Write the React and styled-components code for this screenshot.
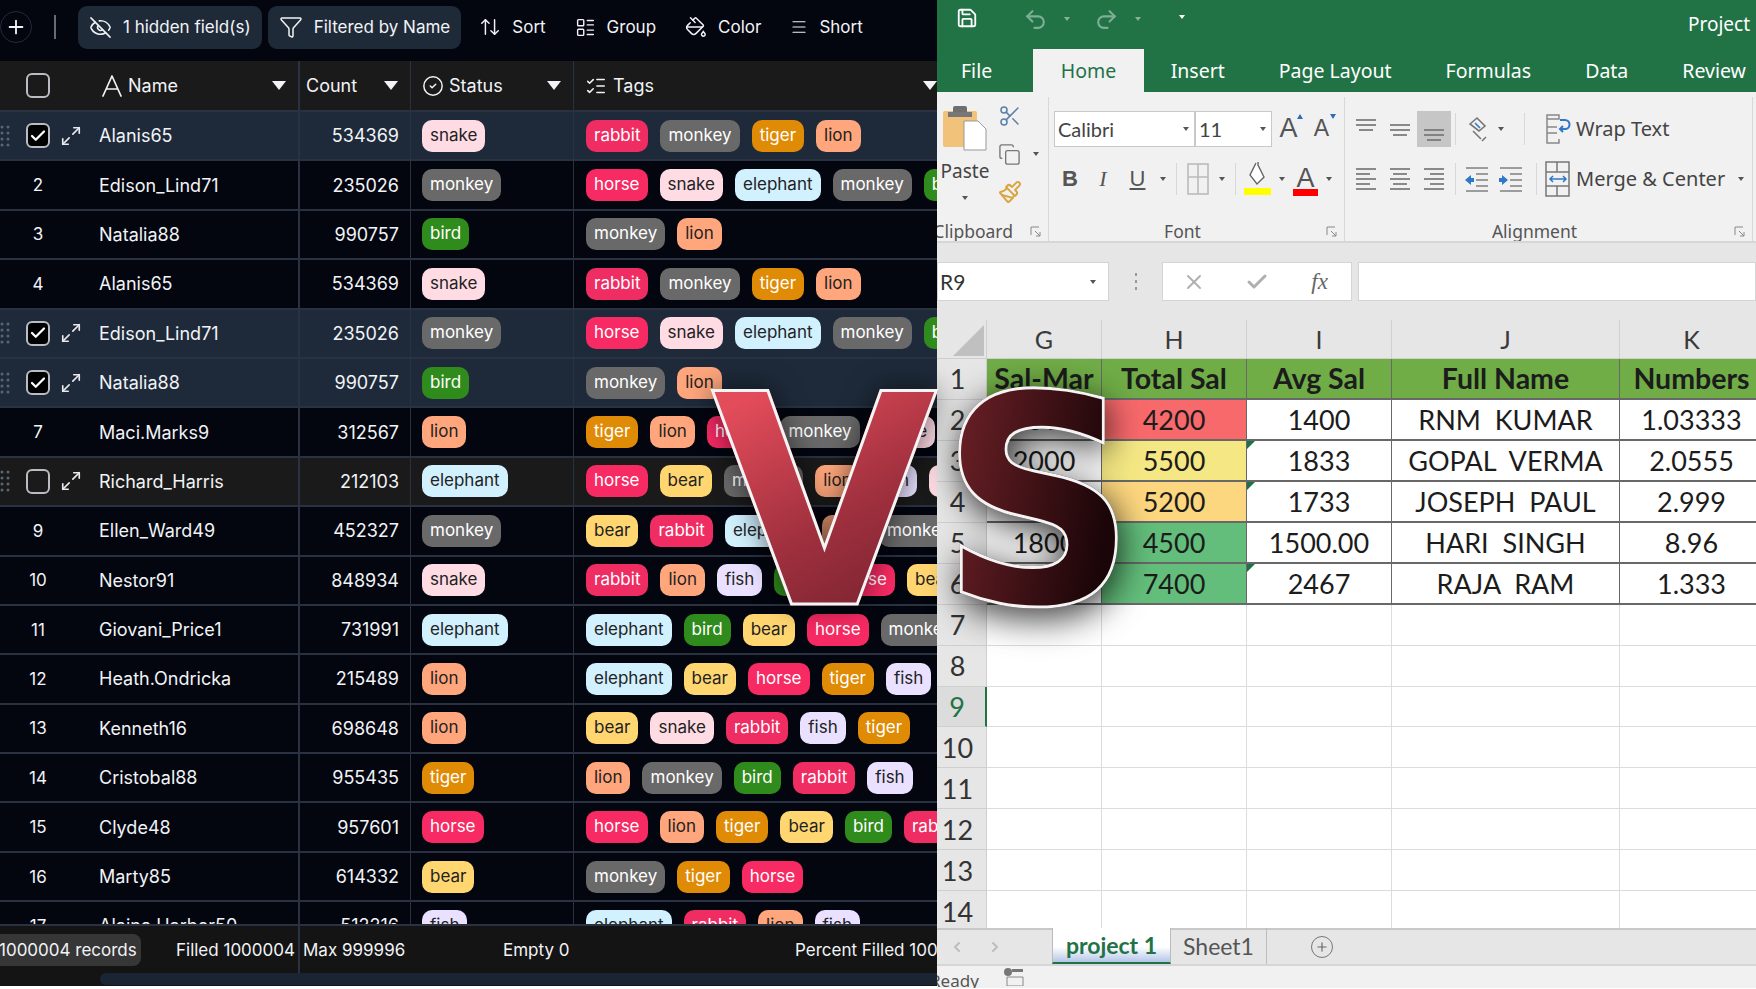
import React from 'react';
import styled, { createGlobalStyle } from 'styled-components';
import {
  Plus, EyeOff, Funnel, ArrowUpDown, LayoutList, PaintBucket, Menu, CircleCheck, ListChecks,
  Maximize2, Check, Save, Undo2, Redo2, Scissors, Copy, Paintbrush, X, ChevronLeft, ChevronRight,
} from 'lucide-react';

const GlobalStyle = createGlobalStyle`
  html, body { margin: 0; padding: 0; background: #fff; }
  body { font-family: Inter, "Liberation Sans", sans-serif; }
`;

const Page = styled.div`
  position: relative;
  display: flex;
  width: 1756px;
  height: 988px;
  overflow: hidden;
  background: #fff;
`;

/* ---------- dark table ---------- */

const Board = styled.div`
  width: 937px;
  flex: none;
  height: 986px;
  display: flex;
  flex-direction: column;
  background: #03050f;
  color: #f1f3f6;
  overflow: hidden;
  font-size: 18px;
`;

const Toolbar = styled.div`
  height: 61px;
  flex: none;
  display: flex;
  align-items: center;
  padding-bottom: 7px;
  box-sizing: border-box;
`;

const RoundBtn = styled.div`
  width: 32px;
  height: 32px;
  flex: none;
  border: 1px solid #252a38;
  border-radius: 50%;
  display: flex;
  align-items: center;
  justify-content: center;
  box-sizing: border-box;
`;

const ToolDivider = styled.div`
  width: 2px;
  height: 24px;
  background: #666b74;
  margin: 0 22px 0 22px;
`;

const Chip = styled.div`
  height: 43px;
  display: flex;
  align-items: center;
  gap: 11px;
  padding: 0 11px;
  margin-right: 6px;
  background: #1f2a38;
  border-radius: 9px;
  font-size: 17px;
  box-sizing: border-box;
`;

const ToolBtn = styled.div`
  display: flex;
  align-items: center;
  gap: 11px;
  margin-left: ${p => p.$ml}px;
  font-size: 17px;
`;

const Grid = styled.div`
  display: grid;
  grid-template-columns: 88px 212px 111px 163px 1fr;
  height: ${p => p.$h}px;
  flex: none;
  box-sizing: border-box;
  background: ${p => p.$bg};
  border-top: ${p => p.$flat ? 'none' : '2px solid #2a3140'};
`;

const Cell = styled.div`
  display: flex;
  align-items: center;
  min-width: 0;
  overflow: hidden;
  white-space: nowrap;
  border-right: ${p => p.$thick ? 2 : p.$open ? 0 : 1}px solid #2a3140;
  box-sizing: border-box;
  padding: ${p => p.$pad || '0'};
  justify-content: ${p => p.$justify || 'flex-start'};
`;

const Marker = styled(Cell)`
  position: relative;
  border-right: none;
  justify-content: flex-start;
  padding-left: 26px;
`;

const RowNum = styled.span`
  width: 32px;
  margin-left: -4px;
  text-align: center;
  font-size: 17px;
`;

const NameIcon = styled.span`
  display: flex;
  margin-right: ${p => p.$mr ?? 6}px;
`;

const HeadText = styled.span`
  flex: 1;
  font-size: 18px;
`;

const Caret = styled.span`
  width: 0;
  height: 0;
  border-left: 7px solid transparent;
  border-right: 7px solid transparent;
  border-top: 9px solid #f1f3f6;
`;

const CheckBox = styled.span`
  width: 24px;
  height: 25px;
  flex: none;
  box-sizing: border-box;
  border: 2px solid #b9bcc2;
  border-radius: 6px;
  display: flex;
  align-items: center;
  justify-content: center;
  background: ${p => p.$on ? '#000' : 'transparent'};
`;

const Grip = styled.svg`
  position: absolute;
  left: 0;
  top: 50%;
  margin-top: -11px;
`;

const Expand = styled.span`
  display: flex;
  margin-left: 10px;
`;

const Tag = styled.span`
  flex: none;
  height: 32px;
  padding: 0 8px;
  line-height: 31px;
  border-radius: 10px;
  font-size: 17px;
  box-sizing: border-box;
  color: ${p => p.$fg};
  background: ${p => p.$bg};
`;

const Tags = styled(Cell)`
  gap: 12px;
  padding-left: 12px;
  border-right: none;
`;

const Footer = styled.div`
  flex: none;
  height: 49px;
  background: #141414;
  border-top: 2px solid #2a3140;
  box-sizing: border-box;
  display: grid;
  grid-template-columns: 300px 1fr;
  font-size: 17px;
  white-space: nowrap;
  overflow: hidden;
`;

const FootLeft = styled.div`
  display: flex;
  align-items: center;
  border-right: 2px solid #2a3140;
  justify-content: space-between;
  padding-right: 3px;
`;

const Records = styled.span`
  height: 32px;
  line-height: 32px;
  margin-left: -3px;
  padding: 0 4px 0 2px;
  background: #363636;
  border-radius: 0 8px 8px 0;
`;

const FootRight = styled.div`
  display: grid;
  grid-template-columns: 200px 292px 1fr;
  align-items: center;
  padding-left: 3px;
`;

const ScrollArea = styled.div`
  flex: none;
  height: 13px;
  background: #141414;
  padding-left: 100px;
`;

const ScrollThumb = styled.div`
  height: 12px;
  background: #1a2433;
  border-radius: 6px 0 0 6px;
`;

const Rows = styled.div`
  flex: 1;
  min-height: 0;
  overflow: hidden;
`;

const TAGS = {
  rabbit: ['#ef2d63', '#fff'],
  horse: ['#f72a63', '#fff'],
  monkey: ['#696969', '#fff'],
  tiger: ['#e08b05', '#fff'],
  lion: ['#ffa67c', '#222'],
  snake: ['#ffdbe4', '#222'],
  elephant: ['#d1f1ff', '#222'],
  bird: ['#2f8b1c', '#fff'],
  bear: ['#ffd670', '#222'],
  fish: ['#e9e1ff', '#222'],
};

const ROWS = [
  ['1', 'Alanis65', '534369', 'snake', 'rabbit monkey tiger lion', 'on'],
  ['2', 'Edison_Lind71', '235026', 'monkey', 'horse snake elephant monkey bird'],
  ['3', 'Natalia88', '990757', 'bird', 'monkey lion'],
  ['4', 'Alanis65', '534369', 'snake', 'rabbit monkey tiger lion'],
  ['5', 'Edison_Lind71', '235026', 'monkey', 'horse snake elephant monkey bird', 'on'],
  ['6', 'Natalia88', '990757', 'bird', 'monkey lion', 'on'],
  ['7', 'Maci.Marks9', '312567', 'lion', 'tiger lion horse monkey snake'],
  ['8', 'Richard_Harris', '212103', 'elephant', 'horse bear monkey lion fish snake', 'off'],
  ['9', 'Ellen_Ward49', '452327', 'monkey', 'bear rabbit elephant lion monkey'],
  ['10', 'Nestor91', '848934', 'snake', 'rabbit lion fish bird horse bear'],
  ['11', 'Giovani_Price1', '731991', 'elephant', 'elephant bird bear horse monkey'],
  ['12', 'Heath.Ondricka', '215489', 'lion', 'elephant bear horse tiger fish'],
  ['13', 'Kenneth16', '698648', 'lion', 'bear snake rabbit fish tiger'],
  ['14', 'Cristobal88', '955435', 'tiger', 'lion monkey bird rabbit fish'],
  ['15', 'Clyde48', '957601', 'horse', 'horse lion tiger bear bird rabbit'],
  ['16', 'Marty85', '614332', 'bear', 'monkey tiger horse'],
  ['17', 'Alaina.Harber50', '512216', 'fish', 'elephant rabbit lion fish'],
];

const TagPill = ({ name }) => <Tag $bg={TAGS[name][0]} $fg={TAGS[name][1]}>{name}</Tag>;

const GripDots = () => (
  <Grip width="10" height="22" viewBox="0 0 10 22" fill="#5b6472">
    {[2, 8, 14, 20].map(y => [2, 8].map(x => <circle key={`${x}-${y}`} cx={x} cy={y} r="1.5" />))}
  </Grip>
);

const rowBg = state => (state === 'on' ? '#1e2a3a' : state === 'off' ? '#1a1a1a' : '#03050f');

const TableRow = ({ row }) => {
  const [num, name, count, status, tags, state] = row;
  return (
    <Grid $h={49.4} $bg={rowBg(state)}>
      <Marker>
        {state ? (
          <>
            <GripDots />
            <CheckBox $on={state === 'on'}>{state === 'on' && <Check size={18} strokeWidth={3} color="#fff" />}</CheckBox>
            <Expand><Maximize2 size={22} strokeWidth={1.8} color="#e8eaee" /></Expand>
          </>
        ) : <RowNum>{num}</RowNum>}
      </Marker>
      <Cell $thick $pad="0 0 0 11px">{name}</Cell>
      <Cell $pad="0 11px 0 0" $justify="flex-end">{count}</Cell>
      <Cell $pad="0 0 0 11px"><TagPill name={status} /></Cell>
      <Tags>{tags.split(' ').map((t, i) => <TagPill key={i} name={t} />)}</Tags>
    </Grid>
  );
};

const Table = () => (
  <Board>
    <Toolbar>
      <RoundBtn><Plus size={22} color="#f1f3f6" /></RoundBtn>
      <ToolDivider />
      <Chip><EyeOff size={23} strokeWidth={1.6} />1 hidden field(s)</Chip>
      <Chip><Funnel size={24} strokeWidth={1.5} />Filtered by Name</Chip>
      <ToolBtn $ml={12}><ArrowUpDown size={22} strokeWidth={1.6} />Sort</ToolBtn>
      <ToolBtn $ml={29}><LayoutList size={21} strokeWidth={1.6} />Group</ToolBtn>
      <ToolBtn $ml={29}><PaintBucket size={22} strokeWidth={1.6} />Color</ToolBtn>
      <ToolBtn $ml={29}><Menu size={18} strokeWidth={1.6} />Short</ToolBtn>
    </Toolbar>
    <Grid $h={49} $bg="#1a1a1a" $flat>
      <Marker><CheckBox /></Marker>
      <Cell $thick $pad="0 12px 0 13px">
        <NameIcon $mr={5}>
          <svg width="22" height="24" viewBox="0 0 22 24" fill="none" stroke="#f1f3f6" strokeWidth="1.7" strokeLinecap="round" strokeLinejoin="round">
            <path d="M2 22 11 2l9 20M6 15h10" />
          </svg>
        </NameIcon>
        <HeadText>Name</HeadText><Caret />
      </Cell>
      <Cell $pad="0 12px 0 6px"><HeadText>Count</HeadText><Caret /></Cell>
      <Cell $pad="0 12px 0 11px">
        <NameIcon $mr={5}><CircleCheck size={22} strokeWidth={1.6} /></NameIcon>
        <HeadText>Status</HeadText><Caret />
      </Cell>
      <Cell $open $pad="0 0 0 11px">
        <NameIcon><ListChecks size={22} strokeWidth={1.7} /></NameIcon>
        <HeadText>Tags</HeadText><Caret />
      </Cell>
    </Grid>
    <Rows>{ROWS.map(r => <TableRow key={r[0]} row={r} />)}</Rows>
    <Footer>
      <FootLeft>
        <Records>1000004 records</Records>
        <span>Filled 1000004</span>
      </FootLeft>
      <FootRight>
        <span>Max 999996</span>
        <span>Empty 0</span>
        <span>Percent Filled 100%</span>
      </FootRight>
    </Footer>
    <ScrollArea><ScrollThumb /></ScrollArea>
  </Board>
);

/* ---------- spreadsheet ---------- */

const Excel = styled.div`
  flex: 1;
  min-width: 0;
  display: flex;
  flex-direction: column;
  font-family: "Noto Sans", "Open Sans", sans-serif;
  overflow: hidden;
  height: 988px;
  color: #444;
  background: #f1f1f1;
`;

const TitleBar = styled.div`
  height: 92px;
  flex: none;
  background: #217346;
  display: flex;
  flex-direction: column;
`;

const QuickBar = styled.div`
  height: 49px;
  flex: none;
  display: flex;
  align-items: flex-start;
  padding: 7px 0 0 19px;
  box-sizing: border-box;
  color: #fff;
`;

const QuickBtn = styled.span`
  display: flex;
  margin-left: ${p => p.$ml || 0}px;
  opacity: ${p => p.$dim ? 0.42 : 1};
`;

const MiniCaret = styled.span`
  width: 0;
  height: 0;
  border-left: 3.5px solid transparent;
  border-right: 3.5px solid transparent;
  border-top: 4.5px solid ${p => p.$color || '#555'};
  opacity: ${p => p.$dim ? 0.45 : 1};
  margin-left: ${p => p.$ml || 0}px;
  margin-top: ${p => p.$mt || 0}px;
  flex: none;
`;

const DocTitle = styled.span`
  margin-left: auto;
  margin-top: 4px;
  padding-right: 6px;
  font-size: 19px;
`;

const TabBar = styled.div`
  flex: 1;
  display: flex;
  align-items: stretch;
  font-size: 19.5px;
  white-space: nowrap;
`;

const RibbonTab = styled.div`
  flex: none;
  padding: 0 ${p => p.$px ?? 27}px;
  margin-right: ${p => p.$mr || 0}px;
  display: flex;
  align-items: center;
  color: ${p => p.$active ? '#217346' : '#fff'};
  background: ${p => p.$active ? '#f1f1f1' : 'transparent'};
`;

const Ribbon = styled.div`
  height: 151px;
  flex: none;
  display: flex;
  background: #f1f1f1;
  border-bottom: 2px solid #d6d6d6;
  box-sizing: border-box;
`;

const Group = styled.div`
  width: ${p => p.$w}px;
  flex: none;
  margin: 5px 0 0;
  display: flex;
  flex-direction: column;
  border-right: 1px solid #d8d8d8;
  overflow: hidden;
  box-sizing: border-box;
`;

const GroupBody = styled.div`
  flex: 1;
  display: flex;
  min-height: 0;
`;

const GroupLabel = styled.div`
  height: 20px;
  flex: none;
  display: flex;
  align-items: center;
  justify-content: ${p => p.$end ? 'flex-end' : 'center'};
  position: relative;
  white-space: nowrap;
  font-size: 17.5px;
  color: #555;
  padding-right: ${p => p.$pr || 0}px;
`;

const Launcher = styled.svg`
  position: absolute;
  right: 7px;
  top: 5px;
`;

const PasteCol = styled.div`
  width: 56px;
  display: flex;
  flex-direction: column;
  align-items: center;
  padding-top: 6px;
  font-size: 19px;
  color: #444;
`;

const PasteName = styled.span`
  margin: 7px 0 12px;
`;

const ClipTools = styled.div`
  display: flex;
  flex-direction: column;
  gap: 12px;
  padding: 6px 0 0 4px;
`;

const ClipTool = styled.div`
  display: flex;
  align-items: center;
  gap: 12px;
  height: 26px;
  padding-left: 1px;
`;

const Stack = styled.div`
  display: flex;
  flex-direction: column;
  gap: 13px;
  padding: 13px 0 0 ${p => p.$pl || 0}px;
`;

const ToolRow = styled.div`
  display: flex;
  align-items: center;
  height: 37px;
`;

const Select = styled.div`
  width: ${p => p.$w}px;
  height: 36px;
  background: #fff;
  border: 1px solid #c9c9c9;
  margin-left: ${p => p.$ml || 0}px;
  box-sizing: border-box;
  display: flex;
  align-items: center;
  justify-content: space-between;
  padding: 0 5px 0 3px;
  font-family: "Lato", sans-serif;
  font-size: 20px;
  color: #444;
`;

const IconCell = styled.div`
  width: ${p => p.$w || 32}px;
  height: 36px;
  flex: none;
  display: flex;
  align-items: center;
  justify-content: center;
  background: ${p => p.$active ? '#c6c6c6' : 'transparent'};
  font-family: ${p => p.$serif ? '"Liberation Serif", serif' : '"Liberation Sans", sans-serif'};
  font-weight: ${p => p.$bold ? 700 : 400};
  font-style: ${p => p.$italic ? 'italic' : 'normal'};
  text-decoration: ${p => p.$under ? 'underline' : 'none'};
  font-size: ${p => p.$fs || 20}px;
  color: #555;
  position: relative;
`;

const RowRule = styled.div`
  width: 1px;
  height: 32px;
  background: #d8d8d8;
  margin: 0 ${p => p.$mx || 5}px;
  flex: none;
`;

const ColorBar = styled.span`
  position: absolute;
  left: 3px;
  right: 3px;
  bottom: 1px;
  height: 7px;
  background: ${p => p.$color};
`;

const GrowA = styled.span`
  font-size: ${p => p.$fs}px;
  line-height: 1;
`;

const Notch = styled.span`
  position: absolute;
  top: 3px;
  right: 2px;
  width: 0;
  height: 0;
  border-left: 3.5px solid transparent;
  border-right: 3.5px solid transparent;
  ${p => p.$up ? 'border-bottom: 5px solid #2d6db5;' : 'border-top: 5px solid #2d6db5;'}
`;

const TextBtn = styled.div`
  display: flex;
  align-items: center;
  gap: 5px;
  height: 37px;
  font-size: 20px;
  color: #444;
  white-space: nowrap;
`;

const FormulaBar = styled.div`
  height: 77px;
  flex: none;
  background: #e6e6e6;
  display: flex;
  align-items: center;
`;

const NameBox = styled.div`
  width: 172px;
  height: 39px;
  flex: none;
  background: #fff;
  border: 1px solid #d4d4d4;
  box-sizing: border-box;
  display: flex;
  align-items: center;
  justify-content: space-between;
  padding: 0 12px 0 2px;
  font-family: "Lato", sans-serif;
  font-size: 21px;
  color: #333;
`;

const BarDots = styled.span`
  width: 53px;
  display: flex;
  flex-direction: column;
  align-items: center;
  gap: 4px;
  flex: none;
`;

const BarDot = styled.span`
  width: 2px;
  height: 3px;
  background: #999;
`;

const FxBox = styled.div`
  width: 190px;
  height: 39px;
  flex: none;
  background: #fff;
  border: 1px solid #d4d4d4;
  box-sizing: border-box;
  display: grid;
  grid-template-columns: repeat(3, 1fr);
  place-items: center;
  color: #b0b0b0;
  margin-right: 6px;
`;

const Fx = styled.span`
  font-family: "Liberation Serif", serif;
  font-style: italic;
  font-size: 23px;
  color: #666;
`;

const FormulaInput = styled.div`
  flex: 1;
  height: 39px;
  background: #fff;
  border: 1px solid #d4d4d4;
  box-sizing: border-box;
`;

const Sheet = styled.div`
  flex: 1;
  min-height: 0;
  overflow: hidden;
  display: grid;
  grid-template-columns: 50px 115px 145px 145px 228px 144px;
  grid-template-rows: 39px repeat(14, 40.95px);
  background: #fff;
  font-family: "Lato", sans-serif;
  color: #1c1c1c;
`;

const ColHead = styled.div`
  background: #e6e6e6;
  display: flex;
  align-items: center;
  justify-content: center;
  box-sizing: border-box;
  font-size: 25px;
  color: #3a3a3a;
  border-right: 1px solid #d0d0d0;
  border-bottom: 1px solid #cfcfcf;
`;

const Corner = styled(ColHead)`
  align-items: flex-end;
  justify-content: flex-end;
  padding: 0 2px 2px 0;
`;

const CornerMark = styled.span`
  width: 0;
  height: 0;
  border-left: 31px solid transparent;
  border-bottom: 31px solid #c0c0c0;
`;

const RowHead = styled.div`
  background: ${p => p.$sel ? '#dcdcdc' : '#e6e6e6'};
  display: flex;
  align-items: center;
  justify-content: center;
  padding-right: 8px;
  font-size: 27px;
  color: ${p => p.$sel ? '#217346' : '#333'};
  border-bottom: 1px solid #cfcfcf;
  border-right: ${p => p.$sel ? '2px solid #217346' : '1px solid #cfcfcf'};
  box-sizing: border-box;
`;

const SheetCell = styled.div`
  position: relative;
  display: flex;
  align-items: center;
  justify-content: center;
  font-size: ${p => p.$head ? 28.5 : 27}px;
  white-space: pre;
  overflow: hidden;
  box-sizing: border-box;
  font-weight: ${p => p.$head ? 700 : 400};
  background: ${p => p.$bg || '#fff'};
  border-right: 1px solid ${p => p.$empty ? '#dcdcdc' : '#686868'};
  border-bottom: ${p => p.$empty ? '1px solid #dcdcdc' : '2px solid #686868'};
`;

const ErrorMark = styled.span`
  position: absolute;
  left: 0;
  top: 0;
  width: 0;
  height: 0;
  border-top: 8px solid #1e7145;
  border-right: 8px solid transparent;
`;

const SheetTabs = styled.div`
  height: 38px;
  flex: none;
  display: flex;
  align-items: stretch;
  background: #e6e6e6;
  border-top: 2px solid #c8c8c8;
  border-bottom: 2px solid #d6d6d6;
  box-sizing: border-box;
  color: #bdbdbd;
`;

const TabNav = styled.div`
  width: 115px;
  flex: none;
  display: flex;
  align-items: center;
  gap: 22px;
  padding-left: 12px;
  box-sizing: border-box;
`;

const SheetTab = styled.div`
  display: flex;
  align-items: center;
  justify-content: center;
  width: ${p => p.$w}px;
  margin-top: -2px;
  font-family: "Lato", sans-serif;
  font-size: 23px;
  font-weight: ${p => p.$active ? 700 : 400};
  color: ${p => p.$active ? '#217346' : '#555'};
  background: ${p => p.$active ? 'linear-gradient(#fff 55%, #b5c5e8)' : 'transparent'};
  border-left: ${p => p.$active ? '1px solid #bbb' : 'none'};
  border-right: ${p => p.$active ? '1px solid #bbb' : '1px solid #bdbdbd'};
  border-bottom: ${p => p.$active ? '2px solid #217346' : 'none'};
  box-sizing: border-box;
`;

const AddSheet = styled.span`
  width: 22px;
  height: 22px;
  margin: 6px 0 0 44px;
  flex: none;
  border: 1.5px solid #777;
  border-radius: 50%;
  color: #666;
  display: flex;
  align-items: center;
  justify-content: center;
  box-sizing: border-box;
`;

const StatusBar = styled.div`
  height: 22px;
  flex: none;
  display: flex;
  background: #f1f1f1;
  overflow: hidden;
`;

const Ready = styled.span`
  margin: 3px 23px 0 -7px;
  font-size: 17px;
  color: #555;
  flex: none;
`;

const Launch = () => (
  <Launcher width="11" height="11" viewBox="0 0 11 11" fill="none" stroke="#888" strokeWidth="1">
    <path d="M1 9V1h8M5 5l5 5M10 6v4H6" />
  </Launcher>
);

const Lines = ({ rows }) => (
  <svg width="24" height="28" viewBox="0 0 24 28" stroke="#777" strokeWidth="1.7">
    {rows.map(([x1, x2, y]) => <line key={y} x1={x1} x2={x2} y1={y} y2={y} />)}
  </svg>
);

const Indent = ({ flip }) => (
  <svg width="24" height="28" viewBox="0 0 24 28" fill="#2d78c8" stroke="#888" strokeWidth="1.6">
    {[3, 9, 15, 21, 26].map(y => <line key={y} x1={y === 3 || y === 26 ? 1 : 11} x2="23" y1={y} y2={y} />)}
    <path stroke="none" d={flip ? 'M0 15l6-5v3h3v4H6v3z' : 'M9 15 3 10v3H0v4h3v3z'} />
  </svg>
);

const PasteIcon = () => (
  <svg width="44" height="48" viewBox="0 0 44 48">
    <rect x="0" y="8" width="34" height="36" rx="2" fill="#f0c27a" />
    <rect x="10" y="3" width="14" height="10" rx="2" fill="#6f6f6f" />
    <rect x="5" y="9" width="24" height="5" fill="#777" />
    <path d="M21 22h14l8 8v21H21z" transform="translate(0 -4)" fill="#fff" stroke="#999" />
  </svg>
);

const WrapIcon = () => (
  <svg width="26" height="34" viewBox="0 0 26 34" fill="none" stroke="#888" strokeWidth="1.5">
    <path d="M2 3h12v4H2zM2 7v24h12v-4M2 15h10M2 21h10" />
    <path d="M15 8h5a4 4 0 0 1 0 9h-4" stroke="#2d78c8" strokeWidth="2" />
    <path d="m18 14-3 3 3 3" stroke="#2d78c8" strokeWidth="2" />
  </svg>
);

const MergeIcon = () => (
  <svg width="26" height="36" viewBox="0 0 26 36" fill="none" stroke="#777" strokeWidth="1.5">
    <rect x="1" y="1" width="23" height="34" />
    <path d="M1 11h23M1 25h23M12 1v10M12 25v10" />
    <path d="M5 18h16M8 15l-3 3 3 3M18 15l3 3-3 3" stroke="#2d78c8" />
  </svg>
);

const BorderIcon = () => (
  <svg width="22" height="32" viewBox="0 0 22 32" fill="none" stroke="#bbb" strokeWidth="1.6">
    <rect x="1" y="1" width="20" height="30" />
    <path d="M11 1v30M1 14h20" />
  </svg>
);

const FillIcon = () => (
  <svg width="28" height="36" viewBox="0 0 28 36" fill="none">
    <path d="M13 2 7 14l7 9 7-7-6-12V1" stroke="#666" strokeWidth="1.4" fill="#fff" />
    <rect x="1" y="27" width="27" height="7" fill="#ffff00" />
  </svg>
);

const OrientIcon = () => (
  <svg width="20" height="28" viewBox="0 0 20 28" fill="none" stroke="#777" strokeWidth="1.6">
    <path d="M2 9 9 3l8 8-6 5zM5 16l8 8M14 26l4-4" />
    <path d="M7 8l5 5" stroke="#2d78c8" />
  </svg>
);

const COLS = ['G', 'H', 'I', 'J', 'K'];
const SHEET = [
  ['Sal-Mar', 'Total Sal', 'Avg Sal', 'Full Name', 'Numbers'],
  ['1500', '4200', '1400', 'RNM  KUMAR', '1.03333'],
  ['2000', '5500', '1833', 'GOPAL  VERMA', '2.0555'],
  ['1500', '5200', '1733', 'JOSEPH  PAUL', '2.999'],
  ['1800', '4500', '1500.00', 'HARI  SINGH', '8.96'],
  ['3000', '7400', '2467', 'RAJA  RAM', '1.333'],
];
const HEAT = ['#f8696b', '#f5e884', '#fdd77f', '#63be7b', '#63be7b'];
const FLAGGED = [2, 3, 5];

const SheetRows = () => Array.from({ length: 14 }, (_, r) => (
  <React.Fragment key={r}>
    <RowHead $sel={r === 8}>{r + 1}</RowHead>
    {COLS.map((c, i) => {
      const text = SHEET[r]?.[i];
      const bg = r === 0 ? '#70ad47' : i === 1 && r < 6 ? HEAT[r - 1] : undefined;
      return (
        <SheetCell key={c} $head={r === 0} $bg={bg} $empty={r > 5}>
          {i === 2 && FLAGGED.includes(r) && <ErrorMark />}
          {text}
        </SheetCell>
      );
    })}
  </React.Fragment>
));

const ExcelPane = () => (
  <Excel>
    <TitleBar>
      <QuickBar>
        <QuickBtn><Save size={22} strokeWidth={2} /></QuickBtn>
        <QuickBtn $ml={45} $dim><Undo2 size={25} strokeWidth={2} /></QuickBtn>
        <MiniCaret $color="#fff" $dim $ml={16} $mt={10} />
        <QuickBtn $ml={24} $dim><Redo2 size={25} strokeWidth={2} /></QuickBtn>
        <MiniCaret $color="#fff" $dim $ml={16} $mt={10} />
        <MiniCaret $color="#fff" $ml={38} $mt={8} />
        <DocTitle>Project</DocTitle>
      </QuickBar>
      <TabBar>
        <RibbonTab $px={24} $mr={17}>File</RibbonTab>
        <RibbonTab $active $px={27.5}>Home</RibbonTab>
        <RibbonTab>Insert</RibbonTab>
        <RibbonTab>Page Layout</RibbonTab>
        <RibbonTab>Formulas</RibbonTab>
        <RibbonTab>Data</RibbonTab>
        <RibbonTab>Review</RibbonTab>
      </TabBar>
    </TitleBar>
    <Ribbon>
      <Group $w={112}>
        <GroupBody>
          <PasteCol>
            <PasteIcon />
            <PasteName>Paste</PasteName>
            <MiniCaret />
          </PasteCol>
          <ClipTools>
            <ClipTool><Scissors size={24} strokeWidth={1.5} color="#5a7fa8" /></ClipTool>
            <ClipTool><Copy size={23} strokeWidth={1.4} color="#777" /><MiniCaret /></ClipTool>
            <ClipTool><Paintbrush size={24} strokeWidth={2} color="#d9a441" /></ClipTool>
          </ClipTools>
        </GroupBody>
        <GroupLabel $end $pr={35}>Clipboard<Launch /></GroupLabel>
      </Group>
      <Group $w={296}>
        <GroupBody>
          <Stack $pl={5}>
            <ToolRow>
              <Select $w={141}>Calibri<MiniCaret /></Select>
              <Select $w={77}>11<MiniCaret /></Select>
              <IconCell $w={33} $fs={24}><GrowA $fs={27}>A</GrowA><Notch $up /></IconCell>
              <IconCell $w={33}><GrowA $fs={23}>A</GrowA><Notch /></IconCell>
            </ToolRow>
            <ToolRow>
              <IconCell $w={32} $bold $fs={22}>B</IconCell>
              <IconCell $w={34} $italic $fs={22} $serif>I</IconCell>
              <IconCell $w={35} $under $fs={22}>U</IconCell>
              <IconCell $w={16}><MiniCaret /></IconCell>
              <RowRule />
              <IconCell $w={32}><BorderIcon /></IconCell>
              <IconCell $w={16}><MiniCaret /></IconCell>
              <RowRule />
              <IconCell $w={32}><FillIcon /></IconCell>
              <IconCell $w={17}><MiniCaret /></IconCell>
              <IconCell $w={31} $fs={27}>A<ColorBar $color="#ff0000" /></IconCell>
              <IconCell $w={16}><MiniCaret /></IconCell>
            </ToolRow>
          </Stack>
        </GroupBody>
        <GroupLabel $pr={28}>Font<Launch /></GroupLabel>
      </Group>
      <Group $w={408}>
        <GroupBody>
          <Stack $pl={4}>
            <ToolRow>
              <IconCell $w={34}><Lines rows={[[2, 22, 5], [2, 22, 10], [5, 19, 15]]} /></IconCell>
              <IconCell $w={34}><Lines rows={[[2, 22, 10], [2, 22, 15], [5, 19, 20]]} /></IconCell>
              <IconCell $w={34} $active><Lines rows={[[2, 22, 15], [2, 22, 20], [5, 19, 25]]} /></IconCell>
              <RowRule $mx={4} />
              <IconCell $w={36}><OrientIcon /></IconCell>
              <MiniCaret $ml={2} />
              <RowRule $mx={20} />
              <TextBtn><WrapIcon />Wrap Text</TextBtn>
            </ToolRow>
            <ToolRow>
              <IconCell $w={34}><Lines rows={[[2, 22, 4], [2, 16, 9], [2, 22, 14], [2, 16, 19], [2, 22, 24]]} /></IconCell>
              <IconCell $w={34}><Lines rows={[[2, 22, 4], [5, 19, 9], [2, 22, 14], [5, 19, 19], [2, 22, 24]]} /></IconCell>
              <IconCell $w={34}><Lines rows={[[2, 22, 4], [8, 22, 9], [2, 22, 14], [8, 22, 19], [2, 22, 24]]} /></IconCell>
              <RowRule $mx={4} />
              <IconCell $w={34}><Indent flip /></IconCell>
              <IconCell $w={34}><Indent /></IconCell>
              <RowRule $mx={8} />
              <TextBtn><MergeIcon />Merge &amp; Center<MiniCaret $ml={8} /></TextBtn>
            </ToolRow>
          </Stack>
        </GroupBody>
        <GroupLabel $pr={28}>Alignment<Launch /></GroupLabel>
      </Group>
    </Ribbon>
    <FormulaBar>
      <NameBox>R9<MiniCaret /></NameBox>
      <BarDots><BarDot /><BarDot /><BarDot /></BarDots>
      <FxBox>
        <X size={24} strokeWidth={2} />
        <Check size={24} strokeWidth={3} />
        <Fx>fx</Fx>
      </FxBox>
      <FormulaInput />
    </FormulaBar>
    <Sheet>
      <Corner><CornerMark /></Corner>
      {COLS.map(c => <ColHead key={c}>{c}</ColHead>)}
      <SheetRows />
    </Sheet>
    <SheetTabs>
      <TabNav><ChevronLeft size={16} strokeWidth={3} /><ChevronRight size={16} strokeWidth={3} /></TabNav>
      <SheetTab $w={119} $active>project 1</SheetTab>
      <SheetTab $w={96}>Sheet1</SheetTab>
      <AddSheet><Plus size={14} /></AddSheet>
    </SheetTabs>
    <StatusBar>
      <Ready>Ready</Ready>
      <svg width="22" height="20" viewBox="0 0 22 20" fill="#777">
        <circle cx="6" cy="6" r="4" />
        <rect x="10" y="3" width="11" height="3" />
        <path d="M5 11h16v9H5z" fill="none" stroke="#888" />
      </svg>
    </StatusBar>
  </Excel>
);

/* ---------- VS badge, lies over both panes ---------- */

const Letter = styled.span`
  position: absolute;
  left: ${p => p.$x}px;
  top: ${p => p.$y}px;
  font-family: "DejaVu Sans", sans-serif;
  font-weight: 700;
  font-size: ${p => p.$size}px;
  line-height: 1;
  transform: scaleX(${p => p.$sx || 1});
  transform-origin: left top;
  background: ${p => p.$fill};
  -webkit-background-clip: text;
  background-clip: text;
  color: transparent;
  -webkit-text-fill-color: transparent;
  -webkit-text-stroke: 3px #f4f4f4;
  filter: drop-shadow(${p => p.$shadow});
`;

const App = () => (
  <>
    <GlobalStyle />
    <Page>
      <Table />
      <ExcelPane />
      <Letter
        $x={711} $y={356} $size={293}
        $fill="linear-gradient(150deg, #e34c5a 15%, #a0303e 55%, #6f1f2c 95%)"
        $shadow="0 0 14px rgba(0,0,0,.55)"
      >V</Letter>
      <Letter
        $x={940} $y={358} $size={290} $sx={0.94}
        $fill="linear-gradient(100deg, #6a2026 10%, #1a0508 80%)"
        $shadow="2px 9px 18px rgba(0,0,0,.8)"
      >S</Letter>
    </Page>
  </>
);

export default App;
